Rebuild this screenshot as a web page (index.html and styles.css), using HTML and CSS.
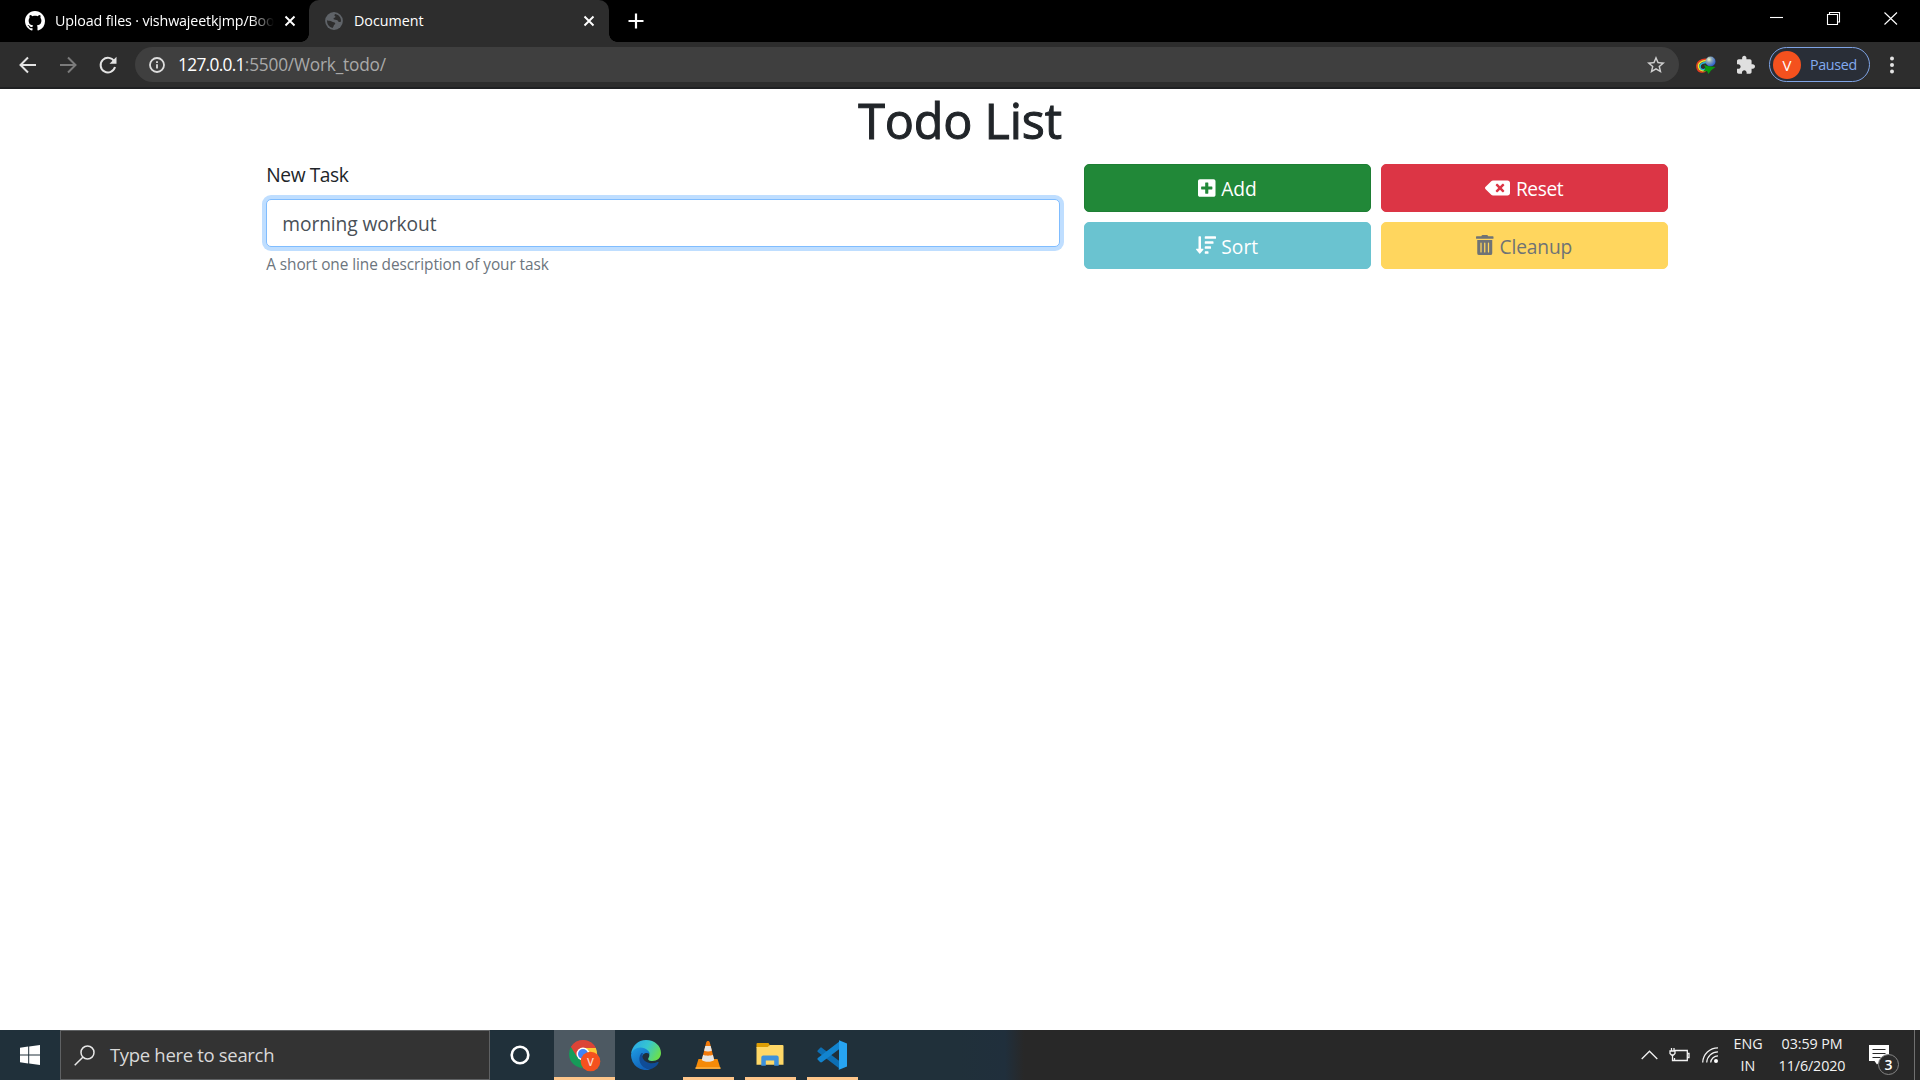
FILE: index.html
```
<!DOCTYPE html>
<html lang="en">
<head>
<meta charset="utf-8">
<title>Document</title>
<link rel="stylesheet" href="styles.css">
</head>
<body>
<header class="browser">
  <div class="tabstrip">
    <div class="tab tab-first">
      <svg class="favicon" viewBox="0 0 16 16" fill="#fff"><path d="M8 0C3.58 0 0 3.58 0 8c0 3.54 2.29 6.53 5.47 7.59.4.07.55-.17.55-.38 0-.19-.01-.82-.01-1.49-2.01.37-2.53-.49-2.69-.94-.09-.23-.48-.94-.82-1.13-.28-.15-.68-.52-.01-.53.63-.01 1.08.58 1.23.82.72 1.21 1.87.87 2.33.66.07-.52.28-.87.51-1.07-1.78-.2-3.64-.89-3.64-3.95 0-.87.31-1.59.82-2.15-.08-.2-.36-1.02.08-2.12 0 0 .67-.21 2.2.82.64-.18 1.32-.27 2-.27s1.36.09 2 .27c1.53-1.04 2.2-.82 2.2-.82.44 1.1.16 1.92.08 2.12.51.56.82 1.27.82 2.15 0 3.07-1.87 3.75-3.65 3.95.29.25.54.73.54 1.48 0 1.07-.01 1.93-.01 2.2 0 .21.15.46.55.38A8.01 8.01 0 0 0 16 8c0-4.42-3.58-8-8-8z"/></svg>
      <span class="tab-title fade">Upload files · vishwajeetkjmp/Boo</span>
      <svg class="tab-close" viewBox="0 0 12 12"><path d="M1.5 1.5l9 9M10.5 1.5l-9 9"/></svg>
    </div>
    <div class="tab tab-active">
      <svg class="favicon" viewBox="0 0 18 18"><circle cx="9" cy="9" r="8.9" fill="#5f6368"/><path d="M10.4 1.9c-1.2.5-1.3 1.6-.4 2.1.8.5.5 1.4-.6 1.7-1.2.3-1 1.4-.1 1.8 1.4.6 3.3.1 3.7 1.5.2 1.1 1.6 1.3 3 .4.4-3.6-2-6.8-5.6-7.5zM2.1 8.3c1.3.8 3.3.3 4.7 1.2 1.3.8 2.9.6 3.4 1.8.4 1.1-1.3 1.3-1.5 2.4-.2 1-.9 1.5-1.1 2.3C4.2 15.3 1.7 12 2.1 8.3z" fill="#2d2d2d"/></svg>
      <span class="tab-title">Document</span>
      <svg class="tab-close" viewBox="0 0 12 12"><path d="M1.5 1.5l9 9M10.5 1.5l-9 9"/></svg>
    </div>
    <svg class="new-tab" viewBox="0 0 16 16"><path d="M8 .5v15M.5 8h15"/></svg>
    <div class="window-controls">
      <svg viewBox="0 0 14 14"><path d="M0 6.5h13"/></svg>
      <svg viewBox="0 0 14 14"><path d="M.5 3.500h10v10H.5zM2.500 3V1.500h10v9.500h-2"/></svg>
      <svg viewBox="0 0 14 14"><path d="M.5 1.5l12.500 12M13 1.5L.5 13.500"/></svg>
    </div>
  </div>
  <div class="toolbar">
    <svg class="nav" viewBox="0 0 18 18"><path d="M17 9H2M9 1.5L1.5 9 9 16.500"/></svg>
    <svg class="nav dim" viewBox="0 0 18 18"><path d="M1 9h15M9 1.5L16.500 9 9 16.500"/></svg>
    <svg class="nav reload" viewBox="0 0 18 18"><path d="M15.300 5.500A7.300 7.300 0 1 0 16 11"/><path class="solid" d="M17.500.8v7h-7z"/></svg>
    <div class="omnibox">
      <svg class="info" viewBox="0 0 16 16"><circle cx="8" cy="8" r="7"/><path d="M8 7.300v4.200M8 4.200v1.800"/></svg>
      <span class="url"><span class="host">127.0.0.1</span><span class="path">:5500/Work_todo/</span></span>
      <svg class="star" viewBox="2 2 20 20"><path d="M22 9.240l-7.190-.62L12 2 9.190 8.630 2 9.240l5.460 4.730L5.820 21 12 17.270 18.180 21l-1.630-7.030L22 9.240zM12 15.400l-3.760 2.270 1-4.280-3.320-2.880 4.380-.38L12 6.100l1.710 4.040 4.380.38-3.320 2.880 1 4.280L12 15.400z"/></svg>
    </div>
    <svg class="idm" viewBox="0 0 20 18">
      <defs><radialGradient id="globe" cx=".35" cy=".3" r=".8"><stop offset="0" stop-color="#eff6c8"/><stop offset=".35" stop-color="#8ba7b8"/><stop offset="1" stop-color="#164ed0"/></radialGradient></defs>
      <path d="M12 3.500C5 2 0 6.500 1 11.500S6.500 16.500 9.500 15" fill="none" stroke="#e93b20" stroke-width="1.500"/>
      <path d="M12 4.900C6 3.700 1.700 7.500 2.500 11s4 4.500 7 3" fill="none" stroke="#f2e12c" stroke-width="1.600"/>
      <path d="M12 6.400C7.500 6 3.600 8 4 11s3.500 3.200 5.500 2" fill="none" stroke="#29b5cf" stroke-width="1.600"/>
      <circle cx="14.500" cy="5.500" r="5" fill="url(#globe)"/>
      <path d="M8 8.500l3 1.500 8.500 1-4.500 3.500-2.500 3.500-1.500-3-4 .5 2.500-3z" fill="#0a9a12"/>
    </svg>
    <svg class="puzzle" viewBox="2 1.500 21 20.500"><path d="M20.500 11H19V7c0-1.100-.9-2-2-2h-4V3.500C13 2.120 11.880 1 10.500 1S8 2.120 8 3.500V5H4c-1.100 0-1.990.9-1.990 2v3.800H3.500c1.490 0 2.700 1.210 2.700 2.700s-1.210 2.700-2.700 2.700H2V20c0 1.100.9 2 2 2h3.800v-1.500c0-1.490 1.210-2.700 2.700-2.700 1.490 0 2.700 1.210 2.700 2.700V22H17c1.100 0 2-.9 2-2v-4h1.500c1.380 0 2.500-1.120 2.500-2.500S21.880 11 20.500 11z"/></svg>
    <div class="profile"><span class="avatar">V</span><span class="paused">Paused</span></div>
    <svg class="dots" viewBox="0 0 6 18"><circle cx="3" cy="2.500" r="2"/><circle cx="3" cy="9" r="2"/><circle cx="3" cy="15.500" r="2"/></svg>
  </div>
</header>
<main class="page">
  <div class="container">
    <h1 class="title">Todo List</h1>
    <div class="row">
      <div class="form">
        <label class="label" for="task">New Task</label>
        <input class="field" id="task" type="text" value="morning workout">
        <small class="help">A short one line description of your task</small>
      </div>
      <div class="actions">
        <button class="btn add"><svg class="w-448" viewBox="0 0 448 512"><path d="M400 32H48C21.500 32 0 53.500 0 80v352c0 26.500 21.500 48 48 48h352c26.500 0 48-21.500 48-48V80c0-26.500-21.500-48-48-48zm-32 252c0 6.600-5.400 12-12 12h-92v92c0 6.600-5.400 12-12 12h-56c-6.600 0-12-5.400-12-12v-92H92c-6.600 0-12-5.400-12-12v-56c0-6.600 5.400-12 12-12h92v-92c0-6.600 5.400-12 12-12h56c6.600 0 12 5.400 12 12v92h92c6.600 0 12 5.400 12 12v56z"/></svg><span>Add</span></button>
        <button class="btn reset"><svg class="w-640" viewBox="0 0 640 512"><path d="M576 64H205.260A63.970 63.970 0 0 0 160 82.750L9.370 233.370c-12.500 12.500-12.500 32.760 0 45.250L160 429.250c12 12 28.280 18.750 45.250 18.750H576c35.350 0 64-28.650 64-64V128c0-35.350-28.650-64-64-64zm-84.690 254.060c6.250 6.250 6.250 16.380 0 22.630l-22.620 22.620c-6.250 6.250-16.380 6.250-22.630 0L384 301.250l-62.060 62.060c-6.250 6.250-16.380 6.250-22.630 0l-22.620-22.620c-6.250-6.250-6.250-16.380 0-22.630L338.750 256l-62.060-62.060c-6.250-6.250-6.250-16.380 0-22.630l22.620-22.620c6.250-6.250 16.380-6.250 22.630 0L384 210.750l62.060-62.060c6.250-6.250 16.380-6.250 22.630 0l22.620 22.620c6.250 6.250 6.250 16.380 0 22.630L429.250 256l62.060 62.060z"/></svg><span>Reset</span></button>
        <button class="btn sort"><svg class="w-512" viewBox="0 0 512 512"><path d="M304 416h-64a16 16 0 0 0-16 16v32a16 16 0 0 0 16 16h64a16 16 0 0 0 16-16v-32a16 16 0 0 0-16-16zm-128-64h-48V48a16 16 0 0 0-16-16H80a16 16 0 0 0-16 16v304H16c-14.190 0-21.370 17.240-11.290 27.310l80 96a16 16 0 0 0 22.620 0l80-96C197.350 369.260 190.220 352 176 352zm256-192H240a16 16 0 0 0-16 16v32a16 16 0 0 0 16 16h192a16 16 0 0 0 16-16v-32a16 16 0 0 0-16-16zm-64 128H240a16 16 0 0 0-16 16v32a16 16 0 0 0 16 16h128a16 16 0 0 0 16-16v-32a16 16 0 0 0-16-16zM496 32H240a16 16 0 0 0-16 16v32a16 16 0 0 0 16 16h256a16 16 0 0 0 16-16V48a16 16 0 0 0-16-16z"/></svg><span>Sort</span></button>
        <button class="btn cleanup"><svg class="w-448" viewBox="0 0 448 512"><path d="M32 464a48 48 0 0 0 48 48h288a48 48 0 0 0 48-48V128H32zm272-256a16 16 0 0 1 32 0v224a16 16 0 0 1-32 0zm-96 0a16 16 0 0 1 32 0v224a16 16 0 0 1-32 0zm-96 0a16 16 0 0 1 32 0v224a16 16 0 0 1-32 0zM432 32H312l-9.400-18.700A24 24 0 0 0 281.100 0H166.800a23.720 23.720 0 0 0-21.400 13.300L136 32H16A16 16 0 0 0 0 48v32a16 16 0 0 0 16 16h416a16 16 0 0 0 16-16V48a16 16 0 0 0-16-16z"/></svg><span>Cleanup</span></button>
      </div>
    </div>
  </div>
</main>
<footer class="taskbar">
  <div class="start"><svg viewBox="0 0 20 20" fill="#fff"><path d="M0 2.700L8.200 1.600V9.500H0zM9.200 1.400L20 0v9.500H9.200zM0 10.500h8.200v7.900L0 17.300zM9.200 10.500H20V20L9.200 18.600z"/></svg></div>
  <div class="search">
    <svg viewBox="0 0 21 21"><circle cx="13.500" cy="7.500" r="6.500"/><path d="M8.800 12.200L.7 20.300"/></svg>
    <span>Type here to search</span>
  </div>
  <div class="cortana"><svg viewBox="0 0 20 20"><circle cx="10" cy="10" r="8.300"/></svg></div>
  <div class="apps">
    <div class="app current">
      <svg viewBox="0 0 32 32">
        <path d="M14 14L1.900 7A14 14 0 0 1 26.200 7.500L27 10z" fill="#db4437"/>
        <path d="M14 14L1.900 7A14 14 0 0 0 14 28l6-10z" fill="#159c58"/>
        <path d="M14 14l0-6h12.800A14 14 0 0 1 14 28z" fill="#fcc934"/>
        <path d="M14 8H26.800A14 14 0 0 0 2 7l6 10z" fill="#db4437"/>
        <circle cx="14" cy="14" r="6.500" fill="#fff"/><circle cx="14" cy="14" r="5" fill="#4285f4"/>
        <circle cx="21.500" cy="21.500" r="9.800" fill="#f4511e"/>
        <text class="badge-letter" x="21.500" y="25.500">V</text>
      </svg>
    </div>
    <div class="app">
      <svg viewBox="0 0 30 30">
        <defs>
          <linearGradient id="edge-top" x1="0" y1=".2" x2="1" y2=".6"><stop offset="0" stop-color="#2aa6e8"/><stop offset=".5" stop-color="#36c6d0"/><stop offset="1" stop-color="#6be04c"/></linearGradient>
          <linearGradient id="edge-low" x1="0" y1="0" x2=".6" y2="1"><stop offset="0" stop-color="#1e9ee4"/><stop offset="1" stop-color="#1160b8"/></linearGradient>
        </defs>
        <path d="M0 14C1 6 7 0 15 0c9 0 15 6 15 13 0 5-4 8-8.500 8-4 0-5-1.500-4-3 2-3 .5-7-4.500-8C8 9 2 10 0 14z" fill="url(#edge-top)"/>
        <path d="M0 15C.5 10.500 5 7.500 9.500 7.500c5.500 0 9.500 4 9.500 7.500-1-3-8-3-8.500 4-.4 6 4 9.500 8.500 10.400A15 15 0 0 1 0 15z" fill="url(#edge-low)"/>
        <path d="M10.500 13c-5 6-1 15 8 16.500 4-1 7.500-3.500 9-6.500.5-1-.3-1.300-1-1-6 3-14 .5-15-5-.2-1.500 0-3 .5-4z" fill="#104c97"/>
      </svg>
    </div>
    <div class="app running">
      <svg viewBox="0 0 30 30">
        <path d="M5.500 19h19L27.500 28.700h-25z" fill="#f58a07"/><path d="M2.500 27.300h25v1.500h-25z" fill="#ffb445"/>
        <path d="M15 1c-1.200 0-1.500.6-1.800 1.500L8.800 20c2 2.400 10.400 2.400 12.400 0L16.800 2.500C16.500 1.600 16.200 1 15 1z" fill="#f27a0a"/>
        <path d="M12.300 6h5.400l1.200 4.700c-2 1-5.800 1-7.800 0zM10.100 14.800c2.500 1.200 7.300 1.200 9.800 0l1.300 5.200c-2 2.400-10.400 2.400-12.400 0z" fill="#e6e6e4"/>
      </svg>
    </div>
    <div class="app running">
      <svg viewBox="0 0 30 30">
        <path d="M1.500 4a1 1 0 0 1 1-1h11l1.500 2.500L13.500 8h-12z" fill="#dc9d04"/><path d="M1.500 7h11.200L15 5h12.500a1 1 0 0 1 1 1v18.800h-27z" fill="#ffd867"/>
        <path d="M6.300 17.500a2 2 0 0 1 2-2h13.400a2 2 0 0 1 2 2v8.300h-4.500v-5.300h-8.400v5.300H6.300z" fill="#3e92dc"/>
      </svg>
    </div>
    <div class="app running">
      <svg viewBox="0 0 30 30">
        <path d="M.8 10.200L3 8c.6-.6 1.500-.6 2.100 0L23 21.500V29L.8 12c-.5-.5-.5-1.300 0-1.800z" fill="#0d6fb4"/>
        <path d="M.8 19.800L3 22c.6.600 1.500.6 2.100 0L23 8.500V1L.8 18c-.5.500-.5 1.300 0 1.800z" fill="#1284cf"/>
        <path d="M22 .2L30 3.500v23l-8 3.300c-1 0 0-.8 0-2V2c0-1 0-1.500 0-1.800z" fill="#27a4f2"/>
      </svg>
    </div>
  </div>
  <div class="tray">
    <svg class="chevron" viewBox="0 0 17 10"><path d="M.7 9l7.800-7.800L16.300 9"/></svg>
    <svg class="battery" viewBox="0 0 21 15"><path d="M5.500 2.500h12.800v10H5.500V10M18.500 5.500h1.500v4h-1.500M2.500 0v3M5 0v3M1 3h5v2.500L4.500 7H2.500L1 5.500zM3.500 7v5.500h2"/></svg>
    <svg class="wifi" viewBox="0 0 17 16"><path d="M.7 15.500A15.300 15.300 0 0 1 16 .8M4.700 15.500A11.300 11.300 0 0 1 16 4.800M8.700 15.500A7.300 7.300 0 0 1 16 8.800"/><circle cx="14" cy="14" r="2"/></svg>
    <div class="stack lang"><span>ENG</span><span>IN</span></div>
    <div class="stack clock"><span>03:59 PM</span><span>11/6/2020</span></div>
    <div class="notifications">
      <svg viewBox="0 0 20 20"><path fill="#fff" d="M0 0h20v16h-8.500L8 19.500 5.500 16H0z"/><path d="M3.500 4.500h13M3.500 8.500h13M3.500 12.500h8" stroke="#282828" stroke-width="1.200"/></svg>
      <span class="count">3</span>
    </div>
    <div class="show-desktop"></div>
  </div>
</footer>
</body>
</html>
```
FILE: styles.css
```
* { box-sizing: border-box; }
body {
  margin: 0;
  width: 1920px;
  height: 1080px;
  display: flex;
  flex-direction: column;
  overflow: hidden;
  background: #fff;
  font-family: "Open Sans", "Noto Sans", sans-serif;
  color: #212529;
}
svg { display: block; flex: none; overflow: visible; }

/* Browser window */
.browser { flex: none; height: 89px; background: #2d2d2d; border-bottom: 2px solid #1f2022; }
.tabstrip { display: flex; height: 42px; background: #000; color: #fff; }
.tab { display: flex; align-items: center; height: 42px; font-size: 14.3px; }
.tab-first { width: 309px; padding: 0 13px 0 25px; }
.tab-active {
  position: relative;
  width: 300px;
  padding: 0 14px 0 16px;
  background: #2d2d2d;
  border-radius: 10px 10px 0 0;
}
.tab-active::before, .tab-active::after {
  content: "";
  position: absolute;
  bottom: 0;
  width: 8px;
  height: 8px;
}
.tab-active::before { left: -8px; background: radial-gradient(circle at 0 0, transparent 7.5px, #2d2d2d 8px); }
.tab-active::after { right: -8px; background: radial-gradient(circle at 100% 0, transparent 7.5px, #2d2d2d 8px); }
.favicon { width: 20px; height: 20px; margin-right: 10px; }
.tab-active .favicon { width: 18px; height: 18px; margin-right: 11px; }
.tab-title { flex: 1; overflow: hidden; white-space: nowrap; line-height: 24px; }
.tab-first .tab-title { letter-spacing: -.16px; }
.fade { -webkit-mask-image: linear-gradient(90deg, #000 calc(100% - 34px), transparent calc(100% - 10px)); mask-image: linear-gradient(90deg, #000 calc(100% - 34px), transparent calc(100% - 10px)); }
.tab-close { width: 12px; height: 12px; fill: none; stroke: #fff; stroke-width: 1.9; }
.new-tab { width: 16px; height: 16px; margin: 13px 0 0 19px; fill: none; stroke: #fff; stroke-width: 2.2; }
.window-controls { display: flex; gap: 43px; margin: 11px 22px 0 auto; }
.window-controls svg { width: 14px; height: 14px; fill: none; stroke: #fff; stroke-width: 1.1; }

.toolbar { display: flex; align-items: center; height: 45px; padding-left: 19px; }
.nav { width: 18px; height: 18px; margin-right: 22px; fill: none; stroke: #e3e3e3; stroke-width: 2; }
.dim { stroke: #7b7b7b; }
.reload { margin-right: 18px; }
.reload .solid { fill: #e3e3e3; stroke: none; }
.omnibox {
  display: flex;
  align-items: center;
  width: 1544px;
  height: 35px;
  padding: 0 14px;
  border-radius: 18px;
  background: #3f3f3f;
}
.info { width: 16px; height: 16px; fill: none; stroke: #dedede; stroke-width: 1.8; }
.url { flex: 1; margin-left: 13px; font-size: 17.3px; line-height: 30px; color: #a9a9a9; letter-spacing: -.2px; }
.host { color: #fff; letter-spacing: -.68px; }
.star { width: 18px; height: 18px; fill: #cfcfcf; }
.idm { width: 20px; height: 18px; margin-left: 17px; }
.puzzle { width: 18px; height: 18px; margin-left: 21px; fill: #dfdfdf; }
.profile {
  display: flex;
  align-items: center;
  width: 101px;
  height: 35px;
  margin-left: 14px;
  padding-left: 3px;
  border: 1.5px solid #7fa4e6;
  border-radius: 18px;
  background: #292e37;
}
.avatar { width: 28px; height: 28px; border-radius: 50%; background: #f4511e; color: #fff; font-size: 15px; line-height: 28px; text-align: center; }
.paused { margin-left: 9px; font-size: 14.3px; letter-spacing: -.35px; color: #82aaf0; }
.dots { width: 6px; height: 18px; margin-left: 19px; fill: #e3e3e3; }

/* Page */
.page { flex: 1; }
.container { width: 1425px; margin: 0 auto; padding: 0 18.75px; }
.title {
  margin: 0 0 10px;
  padding-top: 1px;
  height: 60px;
  font-size: 48.5px;
  line-height: 60px;
  font-weight: 500;
  text-align: center;
  letter-spacing: -.2px;
  -webkit-text-stroke: 1px #212529;
}
.row { display: grid; grid-template-columns: 831.25px 593.75px; margin: 0 -18.75px; }
.form { display: flex; flex-direction: column; padding: 0 18.75px; }
.label { height: 30px; margin-bottom: 10px; font-size: 19.2px; line-height: 32px; letter-spacing: -.42px; }
.field {
  width: 100%;
  height: 47.5px;
  padding: 2px 15px 0;
  border: 1px solid #80bdff;
  border-radius: 5px;
  outline: none;
  box-shadow: 0 0 0 4px #bfdeff;
  background: #fff;
  font: 19.2px "Open Sans", "Noto Sans", sans-serif;
  letter-spacing: -.08px;
  color: #495057;
}
.help { margin-top: 5px; font-size: 15.4px; line-height: 25px; letter-spacing: -.08px; color: #6c757d; }
.actions { display: grid; grid-template-columns: 1fr 1fr; grid-template-rows: 47.5px 47.5px; gap: 10px; padding: 5px; align-content: start; }
.btn {
  display: flex;
  align-items: center;
  justify-content: center;
  gap: 5px;
  padding: 0;
  border: 1px solid;
  border-radius: 5px;
  font: 19.2px "Open Sans", "Noto Sans", sans-serif;
  color: #fff;
}
.btn svg { height: 20px; fill: currentColor; }
.btn span { padding-top: 2px; }
.w-448 { width: 17.5px; }
.w-512 { width: 20px; }
.w-640 { width: 25px; }
.add { background: #218838; border-color: #1e7e34; gap: 6px; }
.reset { background: #dc3545; border-color: #dc3545; letter-spacing: -.4px; gap: 6px; }
.sort { background: #6ac3d0; border-color: #6ac3d0; }
.cleanup { background: #ffd65e; border-color: #ffd65e; color: #6f7375; letter-spacing: -.15px; gap: 6px; }

/* Taskbar */
.taskbar {
  flex: none;
  display: flex;
  height: 50px;
  background: linear-gradient(90deg, #20303a 0, #20303a 960px, #202f3c 1005px, #282828 1024px);
  color: #f2f2f2;
}
.start { width: 60px; padding: 15px 20px; }
.start svg { width: 20px; height: 20px; }
.search {
  display: flex;
  align-items: center;
  width: 430px;
  border: 1px solid #5f6163;
  background: #333;
  padding-left: 13px;
  font-size: 18.5px;
  letter-spacing: -.32px;
  color: #d9d9d9;
}
.search svg { width: 21px; height: 21px; margin-right: 15px; fill: none; stroke: #e8e8e8; stroke-width: 1.5; }
.search span { padding-bottom: 1px; }
.cortana { width: 64px; padding: 15px 20px; }
.cortana svg { width: 20px; height: 20px; fill: none; stroke: #fff; stroke-width: 2.6; }
.apps { display: flex; gap: 1px; }
.app { width: 61px; padding: 10px 0 0 15px; }
.app svg { width: 30px; height: 30px; }
.current { background: #4d5962; box-shadow: inset 0 -3px #fec68a; }
.current svg { width: 32px; height: 32px; }
.running { background: linear-gradient(#fec68a, #fec68a) center bottom / 51px 3px no-repeat; }
.badge-letter { font: 600 11px "Open Sans", sans-serif; fill: #fbd5c8; text-anchor: middle; }
.tray { display: flex; align-items: center; margin-left: auto; font-size: 14.3px; }
.tray svg { fill: none; stroke: #f2f2f2; stroke-width: 1.3; }
.chevron { width: 17px; height: 10px; }
.battery { width: 21px; height: 15px; margin-left: 11px; }
.wifi { width: 17px; height: 16px; margin-left: 12px; }
.wifi circle { fill: #fff; stroke: none; }
.stack { display: flex; flex-direction: column; align-items: center; line-height: 22px; }
.lang { width: 32px; margin-left: 13px; }
.clock { width: 72px; margin-left: 12px; letter-spacing: -.1px; }
.notifications { position: relative; width: 30px; height: 50px; margin-left: 21px; padding-top: 15px; }
.notifications svg { width: 20px; height: 20px; stroke: none; }
.count {
  position: absolute;
  left: 9px;
  top: 24px;
  width: 21px;
  height: 21px;
  border: 1px solid #858585;
  border-radius: 50%;
  background: #2b2b2b;
  font-size: 14px;
  line-height: 19px;
  font-weight: 600;
  text-align: center;
  color: #fff;
}
.show-desktop { width: 6px; height: 50px; margin-left: 15px; border-left: 1px solid #707070; }
```
